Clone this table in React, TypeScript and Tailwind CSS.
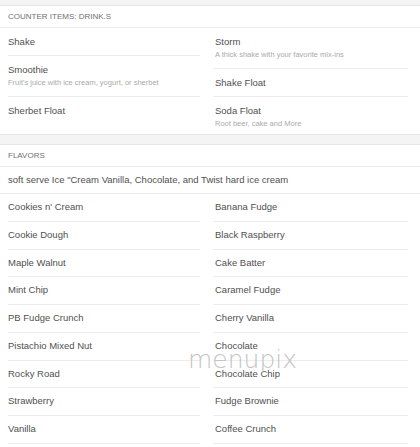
import React from "react";

type Item = { name: string; desc?: string };

const drinksLeft: Item[] = [
  { name: "Shake" },
  { name: "Smoothie", desc: "Fruit's juice with ice cream, yogurt, or sherbet" },
  { name: "Sherbet Float" },
];

const drinksRight: Item[] = [
  { name: "Storm", desc: "A thick shake with your favorite mix-ins" },
  { name: "Shake Float" },
  { name: "Soda Float", desc: "Root beer, cake and More" },
];

const flavors: [string, string][] = [
  ["Cookies n' Cream", "Banana Fudge"],
  ["Cookie Dough", "Black Raspberry"],
  ["Maple Walnut", "Cake Batter"],
  ["Mint Chip", "Caramel Fudge"],
  ["PB Fudge Crunch", "Cherry Vanilla"],
  ["Pistachio Mixed Nut", "Chocolate"],
  ["Rocky Road", "Chocolate Chip"],
  ["Strawberry", "Fudge Brownie"],
  ["Vanilla", "Coffee Crunch"],
];

function MenuRow({ item, last, right }: { item: Item; last?: boolean; right?: boolean }) {
  return (
    <div className={`pt-[7px] ${right ? "pl-[2px]" : ""} ${last ? "pb-[4px]" : "pb-[7px] border-b border-[#ececec]"}`}>
      <div className="text-[9.5px] leading-[13px] text-[#505050]">{item.name}</div>
      {item.desc && <div className="text-[7.5px] leading-[13px] text-[#aaaaaa]">{item.desc}</div>}
    </div>
  );
}

function Header({ title }: { title: string }) {
  return (
    <div className="h-[22px] flex items-center px-2 border-b border-[#ececec] text-[8px] text-[#707070] uppercase">
      {title}
    </div>
  );
}

export default function App() {
  return (
    <div className="relative w-[420px] h-[447px] overflow-hidden bg-white" style={{ fontFamily: '"Liberation Sans", Arial, sans-serif' }}>
      <div className="h-[6px] bg-[#f4f4f4] border-b border-[#e6e6e6]" />

      {/* counter items */}
      <Header title="Counter Items: Drink.s" />
      <div className="flex pl-2 pr-3 gap-[13px]">
        <div className="w-[192px]">
          {drinksLeft.map((it, i) => (
            <MenuRow key={it.name} item={it} last={i === drinksLeft.length - 1} />
          ))}
        </div>
        <div className="w-[195px]">
          {drinksRight.map((it, i) => (
            <MenuRow key={it.name} item={it} right last={i === drinksRight.length - 1} />
          ))}
        </div>
      </div>

      <div className="h-[11px] bg-[#f4f4f4] border-y border-[#e6e6e6]" />

      {/* flavors */}
      <Header title="Flavors" />
      <div className="h-[27px] flex items-center px-2 border-b border-[#ececec] text-[9.5px] text-[#505050]">
        soft serve Ice "Cream Vanilla, Chocolate, and Twist hard ice cream
      </div>
      <div className="grid grid-cols-[192px_195px] gap-x-[13px] pl-2 pr-3">
        {flavors.map(([a, b]) => (
          <React.Fragment key={a}>
            <div className="py-[7px] leading-[12.75px] text-[9.5px] text-[#505050] border-b border-[#ececec]">{a}</div>
            <div className="py-[7px] pl-[2px] leading-[12.75px] text-[9.5px] text-[#505050] border-b border-[#ececec]">{b}</div>
          </React.Fragment>
        ))}
      </div>

      <div
        className="absolute left-[188px] top-[347px] text-[25px] leading-none font-extralight text-[#c4c4c4] pointer-events-none"
        style={{ fontFamily: '"DejaVu Sans", "Liberation Sans", sans-serif' }}
      >
        menupix
      </div>
    </div>
  );
}
